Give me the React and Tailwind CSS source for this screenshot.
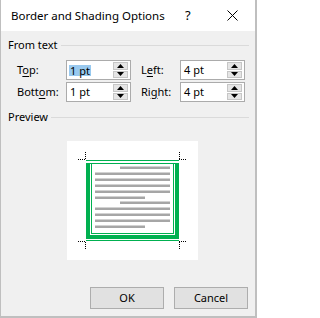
import React from 'react'

const font = { fontFamily: '"Noto Sans", "Open Sans", sans-serif' }

function Spinner() {
  return (
    <div className="flex flex-col w-[15px] my-[1px] mr-[2px] gap-[1px]">
      <div className="flex-1 flex items-center justify-center bg-[#e5e5e5] border border-[#c6c6c6]">
        <svg width="7" height="4" viewBox="0 0 7 4"><path d="M0 4 L3.5 0 L7 4 Z" fill="#000" /></svg>
      </div>
      <div className="flex-1 flex items-center justify-center bg-[#e5e5e5] border border-[#c6c6c6]">
        <svg width="7" height="4" viewBox="0 0 7 4"><path d="M0 0 L7 0 L3.5 4 Z" fill="#000" /></svg>
      </div>
    </div>
  )
}

function SpinBox({ value, selected }) {
  return (
    <div className="flex h-[20px] bg-white border border-[#ababab]">
      <div className="flex-1 flex items-center pl-[2px]">
        <span className={selected ? 'bg-[#99c9ef] px-[1px] leading-[11px]' : 'px-[1px]'}>{value}</span>
      </div>
      <Spinner />
    </div>
  )
}

function Label({ pre, u, post }) {
  return (
    <span>
      {pre}<span className="underline underline-offset-2">{u}</span>{post}
    </span>
  )
}

function Mark({ d }) {
  return <path d={d} stroke="#000" strokeWidth="1" strokeDasharray="1 1" fill="none" />
}

function Preview() {
  const rows = [
    [166, 'ind'], [172, 'full'], [178, 'full'], [184, 'full'], [190, 'full'], [196, 'short'],
    [201, 'ind'], [207, 'full'], [213, 'full'], [219, 'full'], [225, 'short'],
  ]
  const green = '#00b050'
  return (
    <svg width="131" height="119" viewBox="0 0 131 119">
      {/* crop marks */}
      <Mark d="M11 18.5 H19 M18.5 11 V18" />
      <Mark d="M112 18.5 H120 M112.5 11 V18" />
      <Mark d="M11 100.5 H19 M18.5 101 V108" />
      <Mark d="M112 100.5 H120 M112.5 101 V108" />
      {/* border */}
      <rect x="19" y="19" width="93" height="1" fill={green} />
      <rect x="19" y="22" width="93" height="1" fill={green} />
      <rect x="19" y="23" width="4" height="75" fill={green} />
      <rect x="108" y="23" width="4" height="75" fill={green} />
      <rect x="24" y="22" width="1" height="71" fill={green} />
      <rect x="106" y="22" width="1" height="71" fill={green} />
      <rect x="24" y="92" width="83" height="1" fill={green} />
      <rect x="19" y="94" width="93" height="4" fill={green} />
      <rect x="19" y="99" width="93" height="1" fill={green} />
      {/* text lines */}
      {rows.map(([y, kind], i) => {
        const x = kind === 'ind' ? 53 : 28
        const w = kind === 'full' ? 75 : 50
        return <rect key={i} x={x} y={y - 140 - 0.5} width={w} height="2.5" fill="#a6a6a6" />
      })}
    </svg>
  )
}

export default function App() {
  return (
    <div
      className="w-[257px] h-[318px] flex flex-col bg-[#f0f0f0] border-l border-r-2 border-b-2 border-[#bfbfbf] text-[11px] text-black"
      style={font}
    >
      {/* Title bar */}
      <div className="h-[31px] shrink-0 bg-white flex items-center pl-[10px]">
        <span className="w-[174px] text-[11.5px] whitespace-nowrap">Border and Shading Options</span>
        <span className="w-[10px] text-[13px]">?</span>
        <svg width="11" height="11" viewBox="0 0 11 11" className="ml-[32px]">
          <path d="M0.5 0.5 L10.5 10.5 M10.5 0.5 L0.5 10.5" stroke="#000" strokeWidth="1" />
        </svg>
      </div>

      {/* From text group */}
      <div className="flex items-center gap-[3px] pl-[7px] pr-[6px] mt-[6px] h-[16px]">
        <span>From text</span>
        <div className="flex-1 h-px bg-[#dadada]" />
      </div>

      <div className="grid grid-cols-[49px_65px_49px_65px] gap-y-[2px] pl-[16px] mt-[7px]">
        <div className="flex items-center"><Label pre="T" u="o" post="p:" /></div>
        <SpinBox value="1 pt" selected />
        <div className="flex items-center pl-[10px]"><Label pre="L" u="e" post="ft:" /></div>
        <SpinBox value="4 pt" />
        <div className="flex items-center"><Label pre="Bott" u="o" post="m:" /></div>
        <SpinBox value="1 pt" />
        <div className="flex items-center pl-[10px]"><Label pre="Ri" u="g" post="ht:" /></div>
        <SpinBox value="4 pt" />
      </div>

      {/* Preview group */}
      <div className="flex items-center gap-[3px] pl-[7px] pr-[6px] mt-[7px] h-[16px]">
        <span>Preview</span>
        <div className="flex-1 h-px bg-[#dadada]" />
      </div>

      <div className="flex pl-[66px] mt-[16px]">
        <div className="w-[131px] h-[119px] bg-white">
          <Preview />
        </div>
      </div>

      {/* Buttons */}
      <div className="flex justify-end gap-[10px] pr-[7px] mt-[27px]">
        <button className="w-[74px] h-[22px] bg-[#e1e1e1] border border-[#adadad]">OK</button>
        <button className="w-[74px] h-[22px] bg-[#e1e1e1] border border-[#adadad]">Cancel</button>
      </div>
    </div>
  )
}
